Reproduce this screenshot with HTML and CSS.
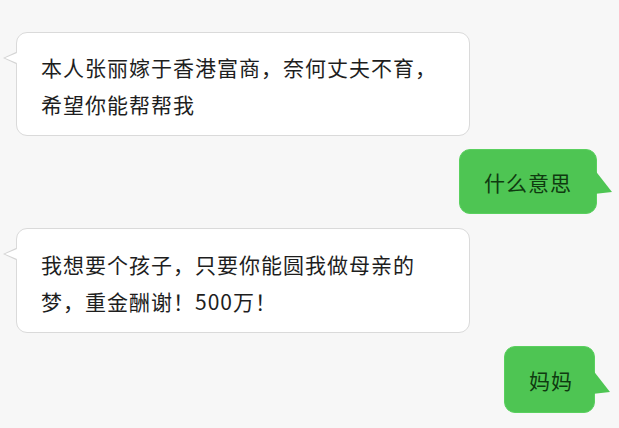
FILE: index.html
```html
<!DOCTYPE html>
<html lang="zh-CN">
<head>
  <meta charset="UTF-8" />
  <meta name="viewport" content="width=device-width, initial-scale=1.0"/>
  <title>聊天记录</title>
  <link rel="stylesheet" href="styles.css">
</head>
<body>
  <div class="chat">
    <div class="msg left first">本人张丽嫁于香港富商，奈何丈夫不育，<br>希望你能帮帮我</div>
    <div class="msg right q1">什么意思</div>
    <div class="msg left second">我想要个孩子，只要你能圆我做母亲的<br>梦，重金酬谢！500万！</div>
    <div class="msg right q2">妈妈</div>
  </div>
</body>
</html>
```

FILE: styles.css
```css
body {
  margin: 0;
  background: #f7f7f7;
  font-family: "Noto Sans CJK SC", "Noto Sans", sans-serif;
  color: #1e1e1e;
}
.chat {
  display: flex;
  flex-direction: column;
  gap: 13px;
  padding: 32px 22px 0 16px;
}
.msg {
  position: relative;
  box-sizing: border-box;
  font-size: 21px;
  letter-spacing: 1px;
  border-radius: 11px;
}
.left {
  align-self: flex-start;
  width: 454px;
  background: #fff;
  border: 1px solid #dadada;
  padding: 16px 20px 13px 24px;
  line-height: 36.5px;
}
.left::before,
.left::after {
  content: "";
  position: absolute;
  width: 0;
  height: 0;
  border-style: solid;
  border-color: transparent;
}
.left::before {
  left: -14px;
  top: 19px;
  border-width: 6px 13px 6px 0;
  border-right-color: #d4d4d4;
}
.left::after {
  left: -12px;
  top: 20px;
  border-width: 5px 12px 5px 0;
  border-right-color: #fff;
}
.second {
  margin-top: 1px;
  padding-top: 17px;
}
.right {
  align-self: flex-end;
  background: #4ec553;
  border: 1px solid #5ad05f;
  color: #0f3a10;
  line-height: 36px;
}
.right::after {
  content: "";
  position: absolute;
  left: calc(100% - 2px);
  top: 19px;
  width: 18px;
  height: 25px;
  background: #4ec553;
  clip-path: polygon(0 0, 100% 92%, 0 100%);
}
.q1 {
  padding: 14px 24px 13px 24px;
}
.q2 {
  margin-right: 2px;
  padding: 15px 21px 14px 24px;
}
.q2::after {
  top: 22px;
}
```
